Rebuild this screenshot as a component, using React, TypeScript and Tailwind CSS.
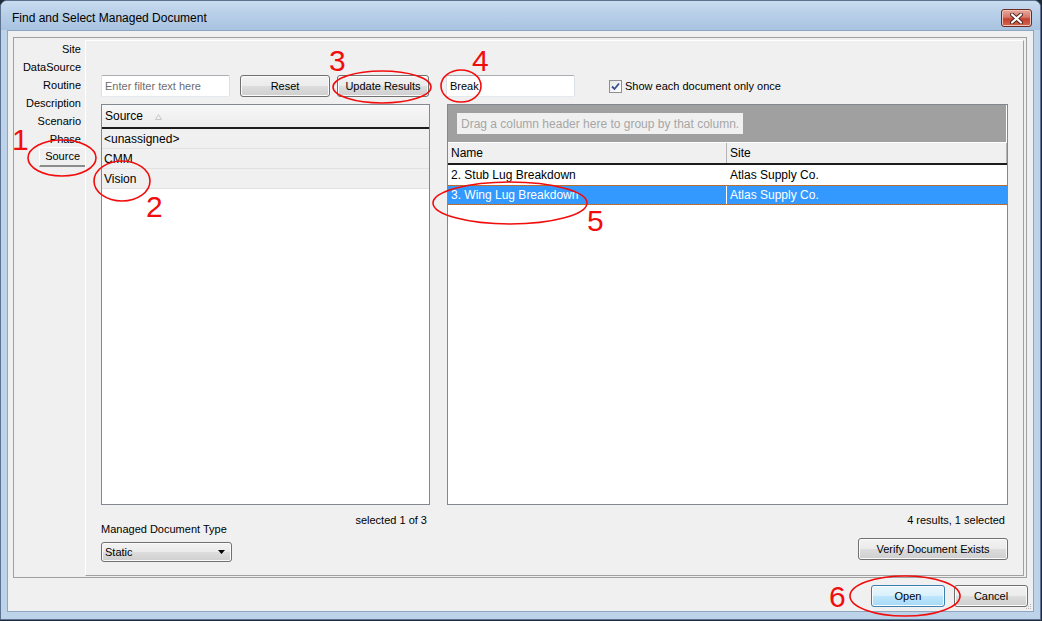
import clsx from "clsx";
import type { ReactNode } from "react";

const tabs = ["Site", "DataSource", "Routine", "Description", "Scenario", "Phase", "Source"];

const sources = ["<unassigned>", "CMM", "Vision"];

const results = [
  { name: "2. Stub Lug Breakdown", site: "Atlas Supply Co.", selected: false },
  { name: "3. Wing Lug Breakdown", site: "Atlas Supply Co.", selected: true },
];

// red markup drawn over the screenshot
const marks = [
  { n: "1", left: 12, top: 125 },
  { n: "2", left: 146, top: 192 },
  { n: "3", left: 329, top: 46 },
  { n: "4", left: 472, top: 46 },
  { n: "5", left: 587, top: 206 },
  { n: "6", left: 829, top: 582 },
];

const rings = [
  { cx: 62, cy: 158, rx: 34, ry: 18 },
  { cx: 122, cy: 181, rx: 28, ry: 20 },
  { cx: 382, cy: 87, rx: 49, ry: 16 },
  { cx: 461, cy: 86, rx: 20, ry: 16 },
  { cx: 510, cy: 203, rx: 77, ry: 21 },
  { cx: 905, cy: 596, rx: 55, ry: 20 },
];

function Btn({
  children,
  className,
  primary,
}: {
  children: ReactNode;
  className?: string;
  primary?: boolean;
}) {
  return (
    <div
      className={clsx(
        "flex items-center justify-center rounded-[3px] border text-[11px] leading-none text-black shadow-[inset_0_0_0_1px_#fbfbfb]",
        primary
          ? "border-[#3c7fb1] bg-[linear-gradient(to_bottom,#eaf6fd_0%,#d9f0fc_50%,#bee6fd_50%,#a7d9f5_100%)] shadow-[inset_0_0_0_1px_#48d2fb]"
          : "border-[#707070] bg-[linear-gradient(to_bottom,#f2f2f2_0%,#ebebeb_50%,#dddddd_50%,#cfcfcf_100%)]",
        className
      )}
    >
      {children}
    </div>
  );
}

function TextBox({ children, muted }: { children: ReactNode; muted?: boolean }) {
  return (
    <div
      className={clsx(
        "flex h-[22px] w-[129px] items-center rounded-[2px] border border-[#dbdfe6] border-t-[#abadb3] border-b-[#e3e9ef] bg-white px-[3px] text-[11px]",
        muted ? "text-[#6d6d6d]" : "text-black"
      )}
    >
      {children}
    </div>
  );
}

export default function App() {
  return (
    <div className="relative h-[621px] w-[1042px] overflow-hidden bg-[#1f2b38] font-['Liberation_Sans',Arial,sans-serif]">
      <div className="flex h-[620px] w-[1041px] flex-col rounded-t-[7px] border border-[#5d7290] bg-[#bcd3ea]">
        {/* title bar */}
        <div className="flex h-[29px] shrink-0 items-center justify-between rounded-t-[6px] bg-[linear-gradient(to_bottom,#c9dcef_0%,#b8cfe8_45%,#a8c3e1_100%)] pl-[11px] pr-[8px]">
          <span className="pt-[5px] text-[12px] text-black">Find and Select Managed Document</span>
          <div className="mt-[5px] flex h-[18px] w-[31px] items-center justify-center rounded-[3px] border border-[#6d2a23] bg-[linear-gradient(to_bottom,#e9aa9e_0%,#d7786a_45%,#c6402f_55%,#d2664f_100%)] shadow-[inset_0_0_0_1px_#eec3ba]">
            <svg width="13" height="11" viewBox="0 0 13 11">
              <path d="M2 1.5 L11 9.5 M11 1.5 L2 9.5" stroke="#4a1f1a" strokeWidth="4" strokeLinecap="round" />
              <path d="M2 1.5 L11 9.5 M11 1.5 L2 9.5" stroke="#ffffff" strokeWidth="2.2" strokeLinecap="round" />
            </svg>
          </div>
        </div>

        {/* client area */}
        <div className="relative mx-[6px] flex h-[582px] flex-col border border-[#8da6c1] bg-[#f0f0f0]">
          <div className="ml-[5px] mr-[6px] mt-[6px] flex h-[541px] border border-[#a0a0a0] pb-[1px] pr-[2px] pt-[2px]">
            {/* tabs on the left */}
            <div className="flex w-[71px] shrink-0 flex-col text-[11px] text-black">
              {tabs.map((t) =>
                t === "Source" ? (
                  <div
                    key={t}
                    className="-mt-[1px] ml-[25px] flex h-[20px] items-center justify-end border-b-2 border-l border-t border-b-[#8c8c8c] border-l-white border-t-white bg-[#f0f0f0] pr-[5px]"
                  >
                    {t}
                  </div>
                ) : (
                  <div key={t} className="flex h-[18px] items-center justify-end pr-[4px]">
                    {t}
                  </div>
                )
              )}
            </div>

            {/* tab page */}
            <div className="flex flex-1 flex-col border border-b-[#a0a0a0] border-l-white border-r-[#a0a0a0] border-t-white bg-[#f0f0f0] pl-[15px] pr-[15px] pt-[34px] text-[11px] text-black">
              <div className="flex gap-[16px]">
                {/* left column */}
                <div className="flex w-[329px] flex-col">
                  <div className="flex h-[22px] items-center">
                    <TextBox muted>Enter filter text here</TextBox>
                    <Btn className="ml-[10px] h-[22px] w-[90px]">Reset</Btn>
                    <Btn className="ml-[7px] h-[22px] w-[92px]">Update Results</Btn>
                  </div>

                  <div className="mt-[7px] flex h-[401px] flex-col border border-[#828790] bg-white">
                    <div className="flex h-[24px] shrink-0 items-center border-b-2 border-b-[#1c1c1c] bg-[linear-gradient(to_bottom,#f7f7f7,#ececec)] pl-[3px]">
                      <span className="text-[12px]">Source</span>
                      <svg className="ml-[12px] mt-[1px]" width="7" height="6" viewBox="0 0 7 6">
                        <path d="M3.5 0.5 L6.5 5.5 L0.5 5.5 Z" fill="none" stroke="#c8c8c8" strokeWidth="1" />
                      </svg>
                    </div>
                    {sources.map((s) => (
                      <div
                        key={s}
                        className="flex h-[20px] shrink-0 items-center border-b border-[#e1e1e1] bg-[#f0f0f0] pl-[2px] text-[12px]"
                      >
                        {s}
                      </div>
                    ))}
                  </div>

                  <div className="flex justify-between">
                    <div className="flex flex-col pt-[18px]">
                      <span className="leading-[13px]">Managed Document Type</span>
                      <Btn className="mt-[6px] h-[20px] w-[131px] !justify-between rounded-[2px] pl-[3px] pr-[6px]">
                        <span>Static</span>
                        <svg width="7" height="4" viewBox="0 0 7 4">
                          <path d="M0 0 L7 0 L3.5 4 Z" fill="#000" />
                        </svg>
                      </Btn>
                    </div>
                    <span className="pr-[3px] pt-[9px] leading-[13px]">selected 1 of 3</span>
                  </div>
                </div>

                {/* right column */}
                <div className="flex flex-1 flex-col">
                  <div className="flex h-[22px] items-center">
                    <TextBox>Break</TextBox>
                    <div className="ml-[34px] flex h-[13px] w-[13px] items-center justify-center border border-[#8e8f8f] bg-[linear-gradient(135deg,#e6e6e6,#ffffff)]">
                      <svg width="9" height="9" viewBox="0 0 9 9">
                        <path d="M1 4.5 L3.5 7 L8 1.5" fill="none" stroke="#34508f" strokeWidth="1.8" />
                      </svg>
                    </div>
                    <span className="ml-[3px]">Show each document only once</span>
                  </div>

                  <div className="ml-[1px] mt-[7px] flex h-[401px] flex-col border border-[#828790] bg-white">
                    <div className="flex h-[37px] shrink-0 items-center border-r border-white bg-[#a0a0a0] pl-[9px]">
                      <div className="flex h-[21px] items-center bg-[#f0f0f0] px-[4px] text-[12px] text-[#a6a6a6]">
                        Drag a column header here to group by that column.
                      </div>
                    </div>
                    <div className="flex h-[23px] shrink-0 items-stretch border-b-2 border-t border-b-[#1c1c1c] border-t-white bg-[#f0f0f0] text-[12px]">
                      <div className="flex w-[279px] items-center border-r border-[#b5b5b5] pl-[3px]">Name</div>
                      <div className="flex flex-1 items-center border-r border-[#b5b5b5] pl-[3px]">Site</div>
                    </div>
                    {results.map((r) => (
                      <div
                        key={r.name}
                        className={clsx(
                          "flex h-[20px] shrink-0 items-stretch text-[12px]",
                          r.selected
                            ? "border-y border-dotted border-[#b0652a] bg-[#3399ff] text-white"
                            : "border-y border-white bg-white text-black"
                        )}
                      >
                        <div className="flex w-[279px] items-center border-r border-white pl-[3px]">{r.name}</div>
                        <div className="flex flex-1 items-center pl-[3px]">{r.site}</div>
                      </div>
                    ))}
                  </div>

                  <div className="flex flex-col items-end">
                    <span className="pr-[3px] pt-[9px] leading-[13px]">4 results, 1 selected</span>
                    <Btn className="mt-[11px] h-[22px] w-[150px]">Verify Document Exists</Btn>
                  </div>
                </div>
              </div>
            </div>
          </div>

          {/* dialog buttons */}
          <div className="mr-[5px] mt-[7px] flex justify-end gap-[9px]">
            <Btn primary className="h-[22px] w-[74px]">
              Open
            </Btn>
            <Btn className="h-[22px] w-[74px]">Cancel</Btn>
          </div>

          {/* size grip */}
          <svg className="absolute bottom-[1px] right-[1px]" width="7" height="7" viewBox="0 0 7 7">
            <g fill="#b8b8b8">
              <rect x="5" y="1" width="1" height="1" />
              <rect x="3" y="3" width="1" height="1" />
              <rect x="5" y="3" width="1" height="1" />
              <rect x="1" y="5" width="1" height="1" />
              <rect x="3" y="5" width="1" height="1" />
              <rect x="5" y="5" width="1" height="1" />
            </g>
          </svg>
        </div>
      </div>

      {/* annotations */}
      <svg className="pointer-events-none absolute left-0 top-0" width="1042" height="621">
        {rings.map((r, i) => (
          <ellipse key={i} cx={r.cx} cy={r.cy} rx={r.rx} ry={r.ry} fill="none" stroke="#f20d0d" strokeWidth="1.6" />
        ))}
      </svg>
      {marks.map((m) => (
        <span
          key={m.n}
          className="pointer-events-none absolute text-[30px] leading-none text-[#f20d0d]"
          style={{ left: m.left, top: m.top }}
        >
          {m.n}
        </span>
      ))}
    </div>
  );
}
